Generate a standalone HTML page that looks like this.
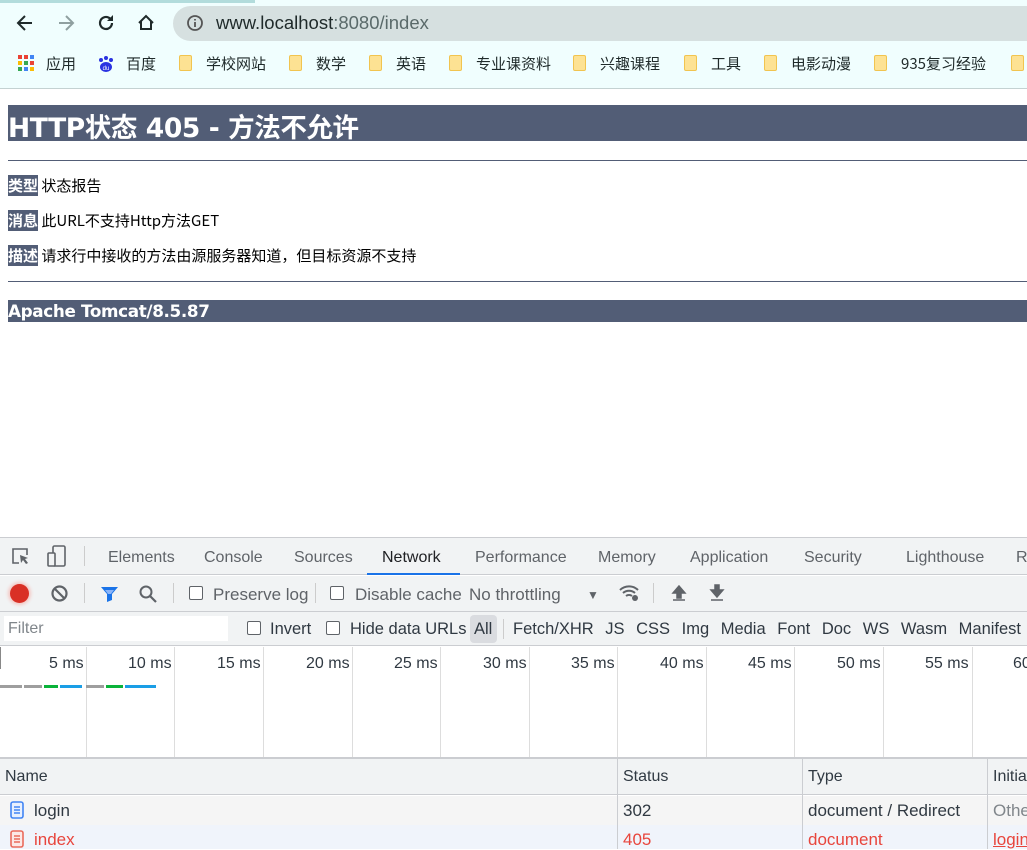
<!DOCTYPE html>
<html><head><meta charset="utf-8"><style>
*{margin:0;padding:0;box-sizing:border-box}
body{width:1027px;height:849px;overflow:hidden;position:relative;background:#fff;font-family:"Liberation Sans","Noto Sans CJK SC",sans-serif}
.a{position:absolute;white-space:nowrap}
.dt{font-family:"Liberation Sans","Noto Sans CJK SC",sans-serif;color:#303942;font-size:16px}
.cn{font-family:"Noto Sans CJK SC","Liberation Sans",sans-serif}
.bm{font-size:15px;color:#1f2a2a;top:53px}
.fold{position:absolute;width:13px;height:16px;background:#fde293;border:1px solid #f1c44f;border-radius:2px}
.vl{position:absolute;width:1px;background:#ddd}
.cb{position:absolute;width:14px;height:14px;border:1.5px solid #5f6368;border-radius:2px;background:#fff}
.pg{font-size:15px;color:#000;line-height:20px}
</style></head><body>
<div class="a" style="left:0;top:0;width:1027px;height:89px;background:#f0fefe;border-bottom:1px solid #c4d2d2"></div>
<div class="a" style="left:0;top:0;width:255px;height:3px;background:#b2dcdc"></div>
<svg class="a" style="left:14px;top:12px" width="22" height="22" viewBox="0 0 22 22"><path d="M18 11H5M11 4L4 11l7 7" stroke="#1f2a2a" stroke-width="2" fill="none"/></svg>
<svg class="a" style="left:55px;top:12px" width="22" height="22" viewBox="0 0 22 22"><path d="M4 11h13M11 4l7 7-7 7" stroke="#8fa0a0" stroke-width="2" fill="none"/></svg>
<svg class="a" style="left:95px;top:12px" width="22" height="22" viewBox="0 0 22 22"><path d="M17 11a6 6 0 1 1-2-4.5" stroke="#1f2a2a" stroke-width="2.2" fill="none"/><path d="M18 3v6h-6z" fill="#1f2a2a"/></svg>
<svg class="a" style="left:135px;top:12px" width="22" height="22" viewBox="0 0 22 22"><path d="M4 11L11 4l7 7M6 9v8h10V9" stroke="#1f2a2a" stroke-width="2" fill="none"/></svg>
<div class="a" style="left:173px;top:6px;width:880px;height:35px;background:#d6e0e0;border-radius:18px"></div>
<svg class="a" style="left:186px;top:14px" width="18" height="18" viewBox="0 0 18 18"><circle cx="9" cy="9" r="7" stroke="#555" stroke-width="1.8" fill="none"/><path d="M9 8v5M9 5v1.5" stroke="#555" stroke-width="1.8"/></svg>
<div class="a" style="left:216px;top:12px;font-size:18.5px;color:#1f2a2a">www.localhost<span style="color:#5a6a6a">:8080/index</span></div>
<svg class="a" style="left:18px;top:55px" width="17" height="17" viewBox="0 0 17 17"><rect x="0" y="0" width="4" height="4" fill="#ea4335"/><rect x="6" y="0" width="4" height="4" fill="#ea4335"/><rect x="12" y="0" width="4" height="4" fill="#4285f4"/><rect x="0" y="6" width="4" height="4" fill="#fbbc05"/><rect x="6" y="6" width="4" height="4" fill="#34a853"/><rect x="12" y="6" width="4" height="4" fill="#ea4335"/><rect x="0" y="12" width="4" height="4" fill="#34a853"/><rect x="6" y="12" width="4" height="4" fill="#4285f4"/><rect x="12" y="12" width="4" height="4" fill="#fbbc05"/></svg>
<div class="a cn bm" style="left:46px">应用</div>
<svg class="a" style="left:97px;top:55px" width="18" height="18" viewBox="0 0 18 18"><circle cx="4" cy="5" r="2" fill="#2932e1"/><circle cx="9" cy="3" r="2" fill="#2932e1"/><circle cx="14" cy="5" r="2" fill="#2932e1"/><ellipse cx="9" cy="12" rx="6" ry="5" fill="#2932e1"/><text x="9" y="15" font-size="6" fill="#fff" text-anchor="middle" font-family="Liberation Sans">du</text></svg>
<div class="a cn bm" style="left:126px">百度</div>
<div class="fold" style="left:179px;top:55px"></div><div class="a cn bm" style="left:206px">学校网站</div>
<div class="fold" style="left:289px;top:55px"></div><div class="a cn bm" style="left:316px">数学</div>
<div class="fold" style="left:369px;top:55px"></div><div class="a cn bm" style="left:396px">英语</div>
<div class="fold" style="left:449px;top:55px"></div><div class="a cn bm" style="left:476px">专业课资料</div>
<div class="fold" style="left:573px;top:55px"></div><div class="a cn bm" style="left:600px">兴趣课程</div>
<div class="fold" style="left:684px;top:55px"></div><div class="a cn bm" style="left:711px">工具</div>
<div class="fold" style="left:764px;top:55px"></div><div class="a cn bm" style="left:791px">电影动漫</div>
<div class="fold" style="left:874px;top:55px"></div><div class="a cn bm" style="left:901px">935复习经验</div>
<div class="fold" style="left:1011px;top:55px"></div>
<div class="a" style="left:8px;top:105px;width:1019px;height:36px;background:#525d76"></div>
<div class="a" style="left:8px;top:106px;font-size:26.5px;font-weight:bold;color:#fff;font-family:'DejaVu Sans','Noto Sans CJK SC',sans-serif;letter-spacing:-0.4px">HTTP状态 405 - 方法不允许</div>
<div class="a" style="left:8px;top:160px;width:1019px;height:1px;background:#525d76"></div>
<div class="a cn pg" style="left:8px;top:176px"><b style="background:#525d76;color:#fff">类型</b> 状态报告</div>
<div class="a cn pg" style="left:8px;top:211px"><b style="background:#525d76;color:#fff">消息</b> 此URL不支持Http方法GET</div>
<div class="a cn pg" style="left:8px;top:246px"><b style="background:#525d76;color:#fff">描述</b> 请求行中接收的方法由源服务器知道，但目标资源不支持</div>
<div class="a" style="left:8px;top:281px;width:1019px;height:1px;background:#525d76"></div>
<div class="a" style="left:8px;top:300px;width:1019px;height:22px;background:#525d76"></div>
<div class="a" style="left:8px;top:301px;font-size:16.8px;font-weight:bold;color:#fff;font-family:'DejaVu Sans',sans-serif;letter-spacing:-0.35px">Apache Tomcat/8.5.87</div>
<div class="a" style="left:0;top:537px;width:1027px;height:312px;background:#fff;border-top:1px solid #cbcdd1"></div>
<div class="a" style="left:0;top:538px;width:1027px;height:37px;background:#f1f3f4;border-bottom:1px solid #cbcdd1"></div>
<svg class="a" style="left:10px;top:546px" width="22" height="22" viewBox="0 0 22 22"><path d="M9 17H3V3h14v6" stroke="#5f6368" stroke-width="1.6" fill="none"/><path d="M10 9l8 3-3 1 3 4-2 1-3-4-2 3z" fill="#5f6368"/></svg>
<svg class="a" style="left:46px;top:544px" width="22" height="24" viewBox="0 0 22 24"><rect x="7" y="2" width="12" height="20" rx="1.5" stroke="#5f6368" stroke-width="1.6" fill="none"/><rect x="2" y="9" width="7" height="13" rx="1" stroke="#5f6368" stroke-width="1.6" fill="#f1f3f4"/></svg>
<div class="a" style="left:84px;top:546px;width:1px;height:20px;background:#ccc"></div>
<div class="a dt" style="left:108px;top:549px;color:#5f6368">Elements</div>
<div class="a dt" style="left:204px;top:549px;color:#5f6368">Console</div>
<div class="a dt" style="left:294px;top:549px;color:#5f6368">Sources</div>
<div class="a dt" style="left:382px;top:549px;color:#202124">Network</div>
<div class="a" style="left:367px;top:573px;width:93px;height:2px;background:#1a73e8"></div>
<div class="a dt" style="left:475px;top:549px;color:#5f6368">Performance</div>
<div class="a dt" style="left:598px;top:549px;color:#5f6368">Memory</div>
<div class="a dt" style="left:690px;top:549px;color:#5f6368">Application</div>
<div class="a dt" style="left:804px;top:549px;color:#5f6368">Security</div>
<div class="a dt" style="left:906px;top:549px;color:#5f6368">Lighthouse</div>
<div class="a dt" style="left:1016px;top:549px;color:#5f6368">R</div>
<div class="a" style="left:0;top:576px;width:1027px;height:36px;background:#f1f3f4;border-bottom:1px solid #cbcdd1"></div>
<div class="a" style="left:10px;top:584px;width:19px;height:19px;border-radius:50%;background:#d93025;box-shadow:0 0 3px 2px #f4c7c3"></div>
<svg class="a" style="left:50px;top:584px" width="19" height="19" viewBox="0 0 19 19"><circle cx="9.5" cy="9.5" r="7" stroke="#5f6368" stroke-width="2.2" fill="none"/><path d="M4.5 4.5l10 10" stroke="#5f6368" stroke-width="2.2"/></svg>
<div class="a" style="left:84px;top:583px;width:1px;height:20px;background:#ccc"></div>
<svg class="a" style="left:99px;top:585px" width="21" height="18" viewBox="0 0 21 18"><path d="M2 2h17l-6 7v6l-5 2V9z" fill="#1a73e8"/><path d="M6 5h9l-3 4h-3z" fill="#8ab4f8"/></svg>
<svg class="a" style="left:138px;top:584px" width="20" height="20" viewBox="0 0 20 20"><circle cx="8" cy="8" r="5.5" stroke="#5f6368" stroke-width="2" fill="none"/><path d="M12 12l6 6" stroke="#5f6368" stroke-width="2.2"/></svg>
<div class="a" style="left:173px;top:583px;width:1px;height:20px;background:#ccc"></div>
<div class="cb" style="left:189px;top:586px"></div>
<div class="a dt" style="left:213px;top:585px;color:#5f6368;font-size:17px">Preserve log</div>
<div class="a" style="left:315px;top:583px;width:1px;height:20px;background:#ccc"></div>
<div class="cb" style="left:330px;top:586px"></div>
<div class="a dt" style="left:355px;top:585px;color:#5f6368;font-size:17px">Disable cache</div>
<div class="a dt" style="left:469px;top:585px;color:#5f6368;font-size:17px">No throttling</div>
<div class="a" style="left:587px;top:588px;font-size:12px;color:#5f6368">▼</div>
<svg class="a" style="left:618px;top:583px" width="24" height="20" viewBox="0 0 24 20"><path d="M2 7a13 13 0 0 1 18 0M5 10a9 9 0 0 1 12 0M8 13a5 5 0 0 1 6 0" stroke="#5f6368" stroke-width="2" fill="none"/><circle cx="17" cy="15" r="3" fill="#5f6368"/></svg>
<div class="a" style="left:653px;top:583px;width:1px;height:20px;background:#ccc"></div>
<svg class="a" style="left:670px;top:584px" width="18" height="18" viewBox="0 0 18 18"><path d="M9 2l-6 7h4v5h4V9h4z M3 16h12" stroke="#5f6368" fill="#5f6368" stroke-width="1.5"/></svg>
<svg class="a" style="left:708px;top:584px" width="18" height="18" viewBox="0 0 18 18"><path d="M9 13l-6-7h4V1h4v5h4z M3 16h12" stroke="#5f6368" fill="#5f6368" stroke-width="1.5"/></svg>
<div class="a" style="left:0;top:612px;width:1027px;height:34px;background:#f1f3f4;border-bottom:1px solid #cbcdd1"></div>
<div class="a" style="left:4px;top:616px;width:224px;height:25px;background:#fff"></div>
<div class="a dt" style="left:8px;top:620px;color:#80868b">Filter</div>
<div class="cb" style="left:247px;top:621px"></div>
<div class="a dt" style="left:270px;top:620px;font-size:16.5px">Invert</div>
<div class="cb" style="left:326px;top:621px"></div>
<div class="a dt" style="left:350px;top:620px;font-size:16.5px">Hide data URLs</div>
<div class="a" style="left:470px;top:615px;width:27px;height:28px;background:#dadce0;border-radius:4px"></div>
<div class="a dt" style="left:474px;top:620px;font-size:16.5px">All</div>
<div class="a" style="left:503px;top:619px;width:1px;height:20px;background:#ccc"></div>
<div class="a dt" style="left:513px;top:620px;font-size:16.5px;word-spacing:7px">Fetch/XHR JS CSS Img Media Font Doc WS Wasm Manifest</div>
<div class="a" style="left:0;top:647px;width:1px;height:22px;background:#888"></div>
<div class="vl" style="left:86px;top:647px;height:110px"></div>
<div class="vl" style="left:174px;top:647px;height:110px"></div>
<div class="vl" style="left:263px;top:647px;height:110px"></div>
<div class="vl" style="left:352px;top:647px;height:110px"></div>
<div class="vl" style="left:440px;top:647px;height:110px"></div>
<div class="vl" style="left:529px;top:647px;height:110px"></div>
<div class="vl" style="left:617px;top:647px;height:110px"></div>
<div class="vl" style="left:706px;top:647px;height:110px"></div>
<div class="vl" style="left:794px;top:647px;height:110px"></div>
<div class="vl" style="left:883px;top:647px;height:110px"></div>
<div class="vl" style="left:972px;top:647px;height:110px"></div>
<div class="a dt" style="left:49px;top:655px">5 ms</div>
<div class="a dt" style="left:128px;top:655px">10 ms</div>
<div class="a dt" style="left:217px;top:655px">15 ms</div>
<div class="a dt" style="left:306px;top:655px">20 ms</div>
<div class="a dt" style="left:394px;top:655px">25 ms</div>
<div class="a dt" style="left:483px;top:655px">30 ms</div>
<div class="a dt" style="left:571px;top:655px">35 ms</div>
<div class="a dt" style="left:660px;top:655px">40 ms</div>
<div class="a dt" style="left:748px;top:655px">45 ms</div>
<div class="a dt" style="left:837px;top:655px">50 ms</div>
<div class="a dt" style="left:925px;top:655px">55 ms</div>
<div class="a dt" style="left:1013px;top:655px">60</div>
<div class="a" style="left:0;top:685px;width:22px;height:3px;background:#9e9e9e"></div>
<div class="a" style="left:24px;top:685px;width:18px;height:3px;background:#9e9e9e"></div>
<div class="a" style="left:44px;top:685px;width:14px;height:3px;background:#0ab33a"></div>
<div class="a" style="left:60px;top:685px;width:22px;height:3px;background:#1a9ee6"></div>
<div class="a" style="left:86px;top:685px;width:18px;height:3px;background:#9e9e9e"></div>
<div class="a" style="left:106px;top:685px;width:17px;height:3px;background:#0ab33a"></div>
<div class="a" style="left:125px;top:685px;width:31px;height:3px;background:#1a9ee6"></div>
<div class="a" style="left:0;top:757px;width:1027px;height:2px;background:#cbcdd1"></div>
<div class="a" style="left:0;top:759px;width:1027px;height:36px;background:#f1f3f4;border-bottom:1px solid #cbcdd1"></div>
<div class="a" style="left:0;top:796px;width:1027px;height:29px;background:#f5f5f5"></div>
<div class="a" style="left:0;top:825px;width:1027px;height:24px;background:#f0f4fb"></div>
<div class="a" style="left:617px;top:759px;width:1px;height:90px;background:#cbcdd1"></div>
<div class="a" style="left:802px;top:759px;width:1px;height:90px;background:#cbcdd1"></div>
<div class="a" style="left:987px;top:759px;width:1px;height:90px;background:#cbcdd1"></div>
<div class="a dt" style="left:5px;top:768px">Name</div>
<div class="a dt" style="left:623px;top:768px">Status</div>
<div class="a dt" style="left:808px;top:768px">Type</div>
<div class="a dt" style="left:993px;top:768px">Initia</div>
<svg class="a" style="left:10px;top:801px" width="14" height="18" viewBox="0 0 14 18"><rect x="1" y="1" width="12" height="16" rx="2" stroke="#4285f4" stroke-width="1.6" fill="#e8f0fe"/><path d="M4 6h6M4 9h6M4 12h6" stroke="#4285f4" stroke-width="1.5"/></svg>
<div class="a dt" style="left:34px;top:801px;font-size:17px">login</div>
<div class="a dt" style="left:623px;top:801px;font-size:17px">302</div>
<div class="a dt" style="left:808px;top:801px;font-size:17px">document / Redirect</div>
<div class="a dt" style="left:993px;top:801px;font-size:17px;color:#80868b">Othe</div>
<svg class="a" style="left:10px;top:830px" width="14" height="18" viewBox="0 0 14 18"><rect x="1" y="1" width="12" height="16" rx="2" stroke="#ea6b5c" stroke-width="1.6" fill="#fce8e6"/><path d="M4 6h6M4 9h6M4 12h6" stroke="#ea6b5c" stroke-width="1.5"/></svg>
<div class="a dt" style="left:34px;top:830px;font-size:17px;color:#e8453c">index</div>
<div class="a dt" style="left:623px;top:830px;font-size:17px;color:#e8453c">405</div>
<div class="a dt" style="left:808px;top:830px;font-size:17px;color:#e8453c">document</div>
<div class="a dt" style="left:993px;top:830px;font-size:17px;color:#e8453c;text-decoration:underline">login</div>
</body></html>
